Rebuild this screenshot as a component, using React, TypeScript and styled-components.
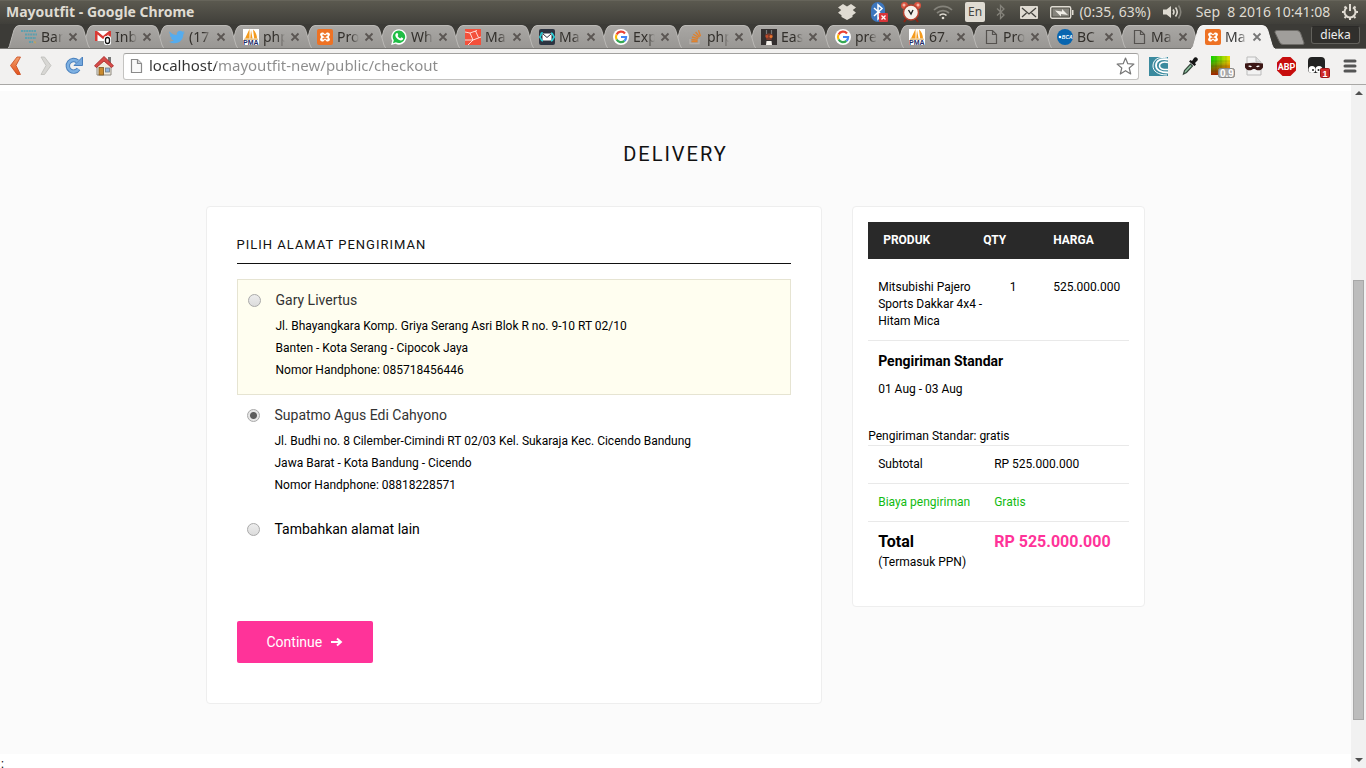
import React, { useState } from 'react';
import styled, { createGlobalStyle } from 'styled-components';

const GlobalStyle = createGlobalStyle`
  * { box-sizing: border-box; }
  body { margin: 0; background: #fff; overflow: hidden; }
`;

const uiFont = '"Noto Sans", "Open Sans", sans-serif';
const pageFont = 'Roboto, "Liberation Sans", sans-serif';

/* ---------- window frame ---------- */

const Window = styled.div`
  display: flex;
  flex-direction: column;
  height: 100vh;
  font-family: ${uiFont};
`;

const TitleBar = styled.header`
  display: flex;
  align-items: center;
  flex: none;
  height: 24px;
  padding-left: 6px;
  color: #dfdbd2;
  background: linear-gradient(#5c5a50, #403f3a);
  box-shadow: inset 0 1px 0 #66645a;
`;

const WindowTitle = styled.div`
  flex: 1;
  font-size: 14px;
  font-weight: 700;
  line-height: 20px;
  white-space: nowrap;
`;

const Tray = styled.div`
  display: flex;
  align-items: center;
  height: 100%;
`;

const Slot = styled.div<{ $w: number }>`
  display: flex;
  align-items: center;
  justify-content: center;
  flex: none;
  width: ${(p) => p.$w}px;
  font-size: 14px;
  line-height: 20px;
  white-space: pre;
`;

const LangBadge = styled.span`
  width: 20px;
  height: 20px;
  border-radius: 2px;
  background: #dfdbd2;
  color: #45443f;
  font-size: 12px;
  line-height: 20px;
  text-align: center;
`;

/* ---------- tab strip ---------- */

const TabStrip = styled.nav`
  display: flex;
  align-items: stretch;
  flex: none;
  height: 25px;
  padding: 1px 6px 0 12px;
  background: #3c3b37;
  box-shadow: inset 0 -1px 0 #767572;
`;

const Tab = styled.div<{ $active?: boolean; $z: number }>`
  position: relative;
  z-index: ${(p) => p.$z};
  display: flex;
  align-items: center;
  flex: none;
  width: 74px;
  padding-left: 9px;
  color: ${(p) => (p.$active ? '#3a3a3a' : '#33302c')};
`;

const TabShape = styled.svg`
  position: absolute;
  left: -6px;
  top: 0;
  z-index: -1;
`;

const TabTitle = styled.span`
  width: 22px;
  margin: 0 5px 0 4px;
  overflow: hidden;
  font-size: 14px;
  line-height: 20px;
  white-space: nowrap;
  mask-image: linear-gradient(90deg, #000 14px, transparent 22px);
`;

const IconButton = styled.button`
  display: flex;
  align-items: center;
  justify-content: center;
  padding: 0;
  border: 0;
  background: none;
`;

const NewTab = styled(IconButton)`
  margin-left: 4px;
  align-self: center;
`;

const UserButton = styled.button`
  align-self: flex-start;
  width: 49px;
  height: 18px;
  margin: 1px 0 0 auto;
  padding: 0;
  border: 1px solid #62615c;
  border-top-color: #2b2a28;
  border-radius: 3px;
  background: #302f2c;
  color: #eee;
  font: 12px/16px ${uiFont};
`;

/* ---------- toolbar ---------- */

const Toolbar = styled.div`
  display: flex;
  align-items: center;
  flex: none;
  height: 36px;
  padding-bottom: 1px;
  background: #f2f1f0;
  border-bottom: 1px solid #a9a8a6;
`;

const AddressBar = styled.label`
  display: flex;
  align-items: center;
  flex: 1;
  height: 27px;
  padding: 0 3px 0 6px;
  border: 1px solid #c4c3c1;
  border-top-color: #a2a19f;
  border-radius: 3px;
  background: #fff;
`;

const AddressInput = styled.input`
  flex: 1;
  min-width: 0;
  height: 22px;
  margin: 0 8px 0 6px;
  padding: 0 0 2px;
  border: 0;
  outline: 0;
  font: 15px/20px ${uiFont};
  color: transparent;
  background: linear-gradient(90deg, #333 67px, #8c8c8c 67px);
  background-clip: text;
  -webkit-background-clip: text;
`;

const Extensions = styled.div`
  display: flex;
  margin-left: 3px;
`;

const ToolButton = styled(IconButton)<{ $w: number }>`
  width: ${(p) => p.$w}px;
  height: 28px;
`;

/* ---------- viewport and scroll bar ---------- */

const Viewport = styled.div`
  display: flex;
  flex: 1;
  min-height: 0;
`;

const Page = styled.main`
  flex: 1;
  min-width: 0;
  padding-top: 6px;
  overflow: hidden;
  background: #fff;
  color: #000;
  font: 12px/17px ${pageFont};
`;

const ScrollBar = styled.div`
  display: flex;
  flex-direction: column;
  flex: none;
  width: 15px;
  background: #f1f1f1;
`;

const ScrollArrow = styled(IconButton)`
  flex: none;
  height: 16px;
`;

const ScrollGap = styled.div<{ $grow: number }>`
  flex: ${(p) => p.$grow} 0 0;
`;

const ScrollThumb = styled.div`
  flex: 439 0 0;
  margin: 0 2px;
  border: 1px solid #a8a8a8;
  background: #bcbcbc;
`;

/* ---------- checkout page ---------- */

const Section = styled.section`
  padding: 51px 16px 50px;
  background: #fbfbfb;
`;

const Title = styled.h1`
  margin: 0 0 40px;
  color: #111;
  font-size: 20px;
  font-weight: 400;
  line-height: 24px;
  letter-spacing: 2px;
  text-align: center;
`;

const Columns = styled.div`
  display: grid;
  grid-template-columns: repeat(12, 1fr);
  column-gap: 30px;
  align-items: start;
  max-width: 940px;
  margin: 0 auto;
`;

const Card = styled.div`
  border: 1px solid #eee;
  border-radius: 4px;
  background: #fff;
`;

const AddressCard = styled(Card)`
  grid-column: span 8;
  padding: 30px 30px 40px;
`;

const SummaryCard = styled(Card)`
  grid-column: span 4;
  padding: 15px 15px 24px;
`;

const CardTitle = styled.h2`
  margin: 0 0 15px;
  padding-bottom: 10px;
  border-bottom: 1px solid #111;
  color: #111;
  font-size: 13px;
  font-weight: 400;
  line-height: 16px;
  letter-spacing: 1px;
`;

const Option = styled.label<{ $highlight?: boolean }>`
  display: flex;
  gap: 15px;
  padding: 9px 10px 13px;
  border: ${(p) => (p.$highlight ? '1px solid #e6e4d2' : '0')};
  background: ${(p) => (p.$highlight ? '#fffef0' : 'none')};
`;

const Radio = styled.input`
  flex: none;
  width: 13px;
  height: 13px;
  margin: 5px 0 0;
  appearance: none;
  border: 1px solid #a9a9a9;
  border-radius: 50%;
  background: linear-gradient(#ededed, #dcdcdc);
  &:checked {
    background: radial-gradient(circle, #5c5c5c 3px, #e6e6e6 4px);
  }
`;

const OptionBody = styled.span`
  display: flex;
  flex-direction: column;
  line-height: 22px;
`;

const Name = styled.span<{ $plain?: boolean }>`
  margin-bottom: 4px;
  color: ${(p) => (p.$plain ? '#000' : '#333')};
  font-size: 14px;
`;

const ContinueButton = styled.button`
  display: flex;
  align-items: center;
  gap: 9px;
  height: 42px;
  margin-top: 64px;
  padding: 0 30px;
  border: 0;
  border-radius: 2px;
  background: #ff3399;
  color: #fff;
  font: 14px/20px ${pageFont};
`;

const Table = styled.table`
  width: 100%;
  border-collapse: collapse;
  table-layout: fixed;
  text-align: left;
`;

const HeadCell = styled.th<{ $pad: number; $w?: number }>`
  width: ${(p) => (p.$w ? `${p.$w}px` : 'auto')};
  padding: 10px 0 10px ${(p) => p.$pad}px;
  background: #292929;
  color: #fff;
`;

const ItemCell = styled.td<{ $center?: boolean }>`
  padding: 20px 0 10px ${(p) => (p.$center ? 0 : 10)}px;
  border-bottom: 1px solid #e9e9e9;
  text-align: ${(p) => (p.$center ? 'center' : 'left')};
  vertical-align: top;
`;

const Shipping = styled.div`
  margin: 10px 10px 30px;
`;

const ShippingTitle = styled.h3`
  margin: 0 0 10px;
  font-size: 14px;
  line-height: 20px;
`;

const SumRow = styled.tr<{ $green?: boolean }>`
  border-top: 1px solid #e9e9e9;
  color: ${(p) => (p.$green ? '#11bb11' : '#000')};
`;

const SumLabel = styled.th`
  width: 116px;
  padding: 10px 0 10px 10px;
  font-weight: 400;
`;

const SumValue = styled.td`
  padding: 10px 0 10px 10px;
  vertical-align: top;
`;

const TotalText = styled.strong<{ $pink?: boolean }>`
  display: block;
  color: ${(p) => (p.$pink ? '#ff3399' : '#000')};
  font-size: 16px;
  line-height: 20px;
`;

const TaxNote = styled.span`
  display: block;
  line-height: 20px;
`;

const Trailing = styled.div`
  padding-left: 1px;
  line-height: 20px;
`;

/* ---------- favicons ---------- */

const Fav = ({ children }: { children: React.ReactNode }) => (
  <svg width="16" height="16" viewBox="0 0 16 16" aria-hidden="true">{children}</svg>
);

const icons = {
  valley: (
    <Fav>
      <g stroke="#5d9fae" strokeWidth="2" strokeDasharray="2 0.600" fill="none">
        <path d="M0 2H15" /><path d="M4 5.500H16" /><path d="M4 9H15" /><path d="M8 13h4" />
      </g>
      <path d="M13 12l2 1-1 2z" fill="#c7a74a" />
    </Fav>
  ),
  gmail: (
    <Fav>
      <path d="M0 2h16v10H0z" fill="#fff" />
      <path d="M0 12V2h2l6 5 6-5h2v10h-2.500V5.500L8 10 2.500 5.500V12z" fill="#d93a34" />
      <rect x="9" y="7" width="7" height="9" rx="2" fill="#fff" />
      <rect x="10.500" y="8.500" width="4" height="6" rx="2" fill="#fff" stroke="#111" strokeWidth="1.300" />
    </Fav>
  ),
  twitter: (
    <Fav>
      <path d="M0.500 2.500c2 2.400 4.500 3.500 7.300 3.600C7.300 3.500 9 1.800 11 1.800c1 0 1.800.4 2.400 1l2-.8-1.300 1.900 1.700-.4-1.500 1.700C14.300 10 11 14.200 5.600 14.200c-2 0-3.800-.5-5.400-1.500 1.800.1 3.400-.3 4.700-1.400-1.500-.1-2.500-1-3-2.300h1.400C1.800 8.500.9 7.300.8 5.600l1.400.4C.8 5-.1 3.700.5 2.500z" fill="#55acee" />
    </Fav>
  ),
  pma: (
    <Fav>
      <rect width="16" height="16" fill="#fff" />
      <path d="M6.500 0v9.500H2zM8 1l1.500 8.500H7.300zM10 .5c2.500 2 4 5.500 4 9h-2.800z" fill="#f59b1c" />
      <path d="M1 10.200h14" stroke="#d8a85a" />
      <text x="0" y="16" fontFamily="Liberation Sans" fontWeight="700" fontSize="7" fill="#222c66">PMA</text>
    </Fav>
  ),
  xampp: (
    <Fav>
      <rect width="16" height="16" rx="2" fill="#ee7224" />
      <path d="M5 3.500h1.200L8 5.200l1.800-1.700H11a2.300 2.300 0 0 1 2 2.300L11.800 8l1.200 2.200a2.300 2.300 0 0 1-2 2.300H9.800L8 10.800l-1.800 1.700H5a2.300 2.300 0 0 1-2-2.300L4.200 8 3 5.800a2.300 2.300 0 0 1 2-2.300z" fill="#fff" />
      <path d="M5.500 6.300h1L8 7.500l1.500-1.200h1M5.500 9.800h1L8 8.500l1.500 1.300h1" stroke="#ee7224" strokeWidth="1.500" fill="none" />
    </Fav>
  ),
  whatsapp: (
    <Fav>
      <path d="M8.200.2A7.700 7.700 0 1 1 4.500 14.800L.1 16l1.200-4.300A7.700 7.700 0 0 1 8.200.2z" fill="#fff" />
      <path d="M8.200 1.500a6.300 6.300 0 1 1-3.400 11.800L2 14.200l.8-2.900A6.300 6.300 0 0 1 8.200 1.500z" fill="#20bd45" />
      <path d="M5.200 4.200l1.300-.1.800 1.900-.7 1c.7 1.200 1.500 1.900 2.700 2.400l1-1.100 1.900.9c.1 1.300-.9 2.200-2.200 2.200C7 11 4.500 8.400 4.300 6.200c0-.8.300-1.500.9-2z" fill="#fff" />
    </Fav>
  ),
  laravel: (
    <Fav>
      <rect width="16" height="16" fill="#f4503b" />
      <path d="M0 3l5 1 3 7 8-3M5 4l7-2.500M8 11l-5 5M10.500 2l3 6.500M0 11l8 0" stroke="#fff" strokeWidth="0.800" fill="none" />
    </Fav>
  ),
  mail: (
    <Fav>
      <rect width="16" height="16" rx="2" fill="#2c3340" />
      <path d="M4 4H2.500A2.500 2.500 0 0 0 2 6L.8 8 2 10a2.500 2.500 0 0 0 2 2M12 4a2.500 2.500 0 0 1 2 2l1.200 2L14 10a2.500 2.500 0 0 1-2 2" stroke="#27d0d8" strokeWidth="1.600" fill="none" />
      <rect x="3.500" y="4.500" width="9" height="7" rx="1" fill="#fff" />
      <path d="M4 5l4 3.500L12 5" stroke="#2c3340" fill="none" />
    </Fav>
  ),
  google: (
    <Fav>
      <circle cx="8" cy="8" r="8" fill="#fff" />
      <g fill="none" strokeWidth="2.200">
        <path d="M12 4.400A5.100 5.100 0 0 0 3.600 5.500" stroke="#ea4335" />
        <path d="M3.600 5.500a5.100 5.100 0 0 0 0 5" stroke="#fbbc05" />
        <path d="M3.600 10.500a5.100 5.100 0 0 0 7.800 1.400" stroke="#34a853" />
        <path d="M8 8h5.100a5.100 5.100 0 0 1-1.700 3.900" stroke="#4285f4" />
      </g>
    </Fav>
  ),
  stack: (
    <Fav>
      <path d="M3 10v4.500h9V10" stroke="#b3aeaa" strokeWidth="1.300" fill="none" />
      <path d="M4.500 12.500h6M4.500 10.500l6 .6M5 8l6 1.600M6.300 5.300l5.300 3.200M8.600 3l4 4.800M11.500 1.200l2 6" stroke="#e0812c" strokeWidth="1.300" />
    </Fav>
  ),
  robot: (
    <Fav>
      <rect width="16" height="16" fill="#332f2f" />
      <path d="M5.500 1v4M10.500 1v4" stroke="#777" strokeWidth="1.200" />
      <path d="M4 6c2-2 6-2 8 0l-1.500 5h-5z" fill="#7a3a2c" />
      <circle cx="6" cy="7.500" r="1.400" fill="#c04c2c" /><circle cx="10" cy="7.500" r="1.500" fill="#e8762d" />
      <path d="M5.500 12h5l.5 4H5z" fill="#f4f0ea" />
    </Fav>
  ),
  page: (
    <Fav>
      <path d="M3.500 1.500h6l4 4v9h-10zM9.500 1.500v4h4" stroke="#55524f" strokeWidth="1.200" fill="none" />
    </Fav>
  ),
  bca: (
    <Fav>
      <circle cx="8" cy="8" r="8" fill="#0765b0" />
      <circle cx="3" cy="8" r="1.300" fill="#fff" />
      <text x="4.800" y="10" fontFamily="Liberation Sans" fontWeight="700" fontStyle="italic" fontSize="5" fill="#fff">BCA</text>
    </Fav>
  ),
};

const tabs: { icon: keyof typeof icons; title: string }[] = [
  { icon: 'valley', title: 'Ban' },
  { icon: 'gmail', title: 'Inb' },
  { icon: 'twitter', title: '(17' },
  { icon: 'pma', title: 'php' },
  { icon: 'xampp', title: 'Pro' },
  { icon: 'whatsapp', title: 'Wh' },
  { icon: 'laravel', title: 'Ma' },
  { icon: 'mail', title: 'Ma' },
  { icon: 'google', title: 'Exp' },
  { icon: 'stack', title: 'php' },
  { icon: 'robot', title: 'Eas' },
  { icon: 'google', title: 'pre' },
  { icon: 'pma', title: '67.' },
  { icon: 'page', title: 'Pro' },
  { icon: 'bca', title: 'BC' },
  { icon: 'page', title: 'Ma' },
  { icon: 'xampp', title: 'Ma' },
];

const BrowserTab = ({ icon, title, active, z }: { icon: keyof typeof icons; title: string; active: boolean; z: number }) => (
  <Tab $active={active} $z={z}>
    <TabShape width="86" height="24" viewBox="-6 0 86 24" aria-hidden="true">
      <path
        d="M-5 24C-3 23-2.500 21-2 19L2 5Q3.500.5 7 .5H66Q70 .5 71.500 4.500L76 20Q77 23 79 24"
        fill={active ? '#f2f1f0' : 'url(#tabFill)'}
        stroke={active ? '#f8f7f6' : '#bbb9b6'}
        strokeWidth="1"
      />
      {!active && <path d="M-5 23.500H79" stroke="#767572" />}
    </TabShape>
    {icons[icon]}
    <TabTitle>{title}</TabTitle>
    <IconButton aria-label="Close tab">
      <svg width="10" height="10" viewBox="0 0 10 10">
        <path d="M1.500 1.500l7 7M8.500 1.500l-7 7" stroke={active ? '#777' : '#5b5653'} strokeWidth="1.800" />
      </svg>
    </IconButton>
  </Tab>
);

/* ---------- tray icons ---------- */

const Dropbox = () => (
  <svg width="18" height="16" viewBox="0 0 18 16">
    <path d="M5 0l4 2.600L13 0l5 3.500L14.800 6 18 8.800l-3.500 2.400V13L9 16l-5.500-3v-1.800L0 8.800 3.200 6 0 3.500z" fill="#dfdbd2" />
  </svg>
);

const BluetoothOff = () => (
  <svg width="20" height="22" viewBox="0 0 20 22">
    <rect x="2" y="1" width="14" height="20" rx="7" fill="#3d76bd" />
    <path d="M5 7l8 7-4 4V4l4 3.500L5 15" stroke="#fff" strokeWidth="1.500" fill="none" />
    <rect x="10" y="12" width="9" height="9" rx="1" fill="#d9353a" />
    <path d="M12.500 14.500l4 4M16.500 14.500l-4 4" stroke="#fff" strokeWidth="1.300" />
  </svg>
);

const Alarm = () => (
  <svg width="22" height="22" viewBox="0 0 22 22">
    <circle cx="4.500" cy="4.500" r="3.500" fill="#d9533f" /><circle cx="17.500" cy="4.500" r="3.500" fill="#d9533f" />
    <circle cx="4" cy="4" r="1.500" fill="#f3b3a5" /><circle cx="18" cy="4" r="1.500" fill="#f3b3a5" />
    <path d="M6 18l-2 3M16 18l2 3" stroke="#8b2414" strokeWidth="2" />
    <circle cx="11" cy="11.500" r="7.500" fill="#f6f2ec" stroke="#b5402d" strokeWidth="1.500" />
    <path d="M8.500 9l2.500 4 2-4" stroke="#222" strokeWidth="1.400" fill="none" />
  </svg>
);

const Wifi = () => (
  <svg width="20" height="16" viewBox="0 0 20 16" fill="none" strokeWidth="1.700">
    <path d="M1 6a13 13 0 0 1 18 0" stroke="#85837b" /><path d="M4 9a9 9 0 0 1 12 0" stroke="#85837b" />
    <path d="M6.500 11.500a5 5 0 0 1 7 0" stroke="#dfdbd2" /><circle cx="10" cy="14" r="1.300" fill="#dfdbd2" />
  </svg>
);

const Bluetooth = () => (
  <svg width="10" height="16" viewBox="0 0 10 16">
    <path d="M1 4.500l7 6.500-3.500 3.500v-13L8 5 1 11.500" stroke="#85837b" strokeWidth="1.300" fill="none" />
  </svg>
);

const Mail = () => (
  <svg width="18" height="13" viewBox="0 0 18 13">
    <rect width="18" height="13" rx="1" fill="#dfdbd2" />
    <path d="M2 2l7 6 7-6M2 11l4.500-4M16 11l-4.500-4" stroke="#45443f" strokeWidth="1.300" fill="none" />
  </svg>
);

const Battery = () => (
  <svg width="24" height="13" viewBox="0 0 24 13">
    <rect x="0.700" y="0.700" width="20" height="11.500" rx="1.500" fill="none" stroke="#dfdbd2" strokeWidth="1.400" />
    <path d="M22 4v5h1.500V4z" fill="#dfdbd2" />
    <rect x="2.500" y="2.500" width="16.500" height="8" fill="#85837b" />
    <path d="M5 4.500l7 1V3l6 6-7-1v2.500z" fill="#efece5" />
  </svg>
);

const Volume = () => (
  <svg width="20" height="16" viewBox="0 0 20 16">
    <path d="M0 5.500h3.500L8 2v12l-4.500-3.500H0z" fill="#dfdbd2" />
    <g fill="none" strokeWidth="1.600">
      <path d="M10 5.500q2 2.500 0 5" stroke="#dfdbd2" /><path d="M12.500 3.500q3.500 4.500 0 9" stroke="#dfdbd2" />
      <path d="M15.500 1.500q4.500 6.500 0 13" stroke="#85837b" />
    </g>
  </svg>
);

const Power = () => (
  <svg width="18" height="18" viewBox="0 0 18 18" fill="none" stroke="#dfdbd2">
    <path d="M6 4.300a5.500 5.500 0 1 0 6 0" strokeWidth="2" />
    <path d="M9 1v7" strokeWidth="2" />
    <path d="M3.500 3.500l1.500 1.500M14.500 3.500L13 5M1 9h2M15 9h2M3.500 15L5 13.500M14.500 15L13 13.500M9 15v2" strokeWidth="2" />
  </svg>
);

/* ---------- toolbar icons ---------- */

const Back = () => (
  <svg width="14" height="20" viewBox="0 0 14 20">
    <path d="M8 1L1.500 9.500 8 18.500h3.500L7 9.500 11.500 1z" fill="url(#backFill)" stroke="#c8481c" strokeWidth="0.800" />
  </svg>
);

const Forward = () => (
  <svg width="14" height="20" viewBox="0 0 14 20">
    <path d="M6.500 1L13 9.500 6.500 18.500H3L8 9.500 3 1z" fill="#d8d7d4" stroke="#bdbcb9" strokeWidth="0.800" />
  </svg>
);

const Reload = () => (
  <svg width="18" height="20" viewBox="0 0 18 20">
    <path d="M13.500 13a5.800 5.800 0 1 1-1-7.500" fill="none" stroke="#4a80bd" strokeWidth="4.400" />
    <path d="M17.500 1v8.500H9z" fill="#74a7dc" stroke="#4a80bd" />
    <path d="M13.500 13a5.800 5.800 0 1 1-1-7.500" fill="none" stroke="#7db0e2" strokeWidth="2.600" />
  </svg>
);

const Home = () => (
  <svg width="20" height="20" viewBox="0 0 20 20">
    <rect x="14" y="1" width="3" height="6" fill="#777" />
    <path d="M3 9.500L10 3l7 6.500V19H3z" fill="#f1ece0" stroke="#8d8a80" />
    <rect x="5" y="11.500" width="4.500" height="7.500" fill="#c98a2f" stroke="#7a5520" strokeWidth="0.800" />
    <rect x="11.500" y="12" width="4" height="4" fill="#8fb6de" stroke="#6d7b89" strokeWidth="0.800" />
    <path d="M10 .5l9.500 9.300-2 1.700L10 5l-7.500 6.500-2-1.700z" fill="#d84b48" stroke="#a82c2c" strokeWidth="0.900" />
  </svg>
);

const PageIcon = () => (
  <svg width="13" height="16" viewBox="0 0 13 16">
    <path d="M1.500 1.500h6l4 4v9h-10z" fill="#fafafa" stroke="#8a8a8a" strokeWidth="1.200" />
    <path d="M7.500 1.500v4h4" fill="#ddd" stroke="#8a8a8a" strokeWidth="1.200" />
  </svg>
);

const Star = () => (
  <svg width="19" height="18" viewBox="0 0 19 18">
    <path d="M9.500 1l2.300 5.700 6.100.4-4.700 3.900 1.500 6-5.200-3.300L4.300 17l1.500-6L1.100 7.100l6.100-.4z" fill="#fff" stroke="#777" strokeWidth="1.200" strokeLinejoin="round" />
  </svg>
);

const Spiral = () => (
  <svg width="19" height="19" viewBox="0 0 19 19">
    <rect width="19" height="19" fill="#3b8a9e" />
    <g fill="none" stroke="#fff">
      <path d="M18 1C9-1 4 3 4 9c0 5 5 9 14 9" strokeWidth="1" />
      <path d="M19 2.500C11 1 7 4 7 8.500c0 4.500 5 7 12 7" strokeWidth="1.800" />
      <path d="M19 5.500c-5-1.500-8.500.5-8.500 3.300 0 3 4 4.200 8.500 3.700" strokeWidth="1.500" />
    </g>
  </svg>
);

const Dropper = () => (
  <svg width="18" height="20" viewBox="0 0 18 20">
    <path d="M2.500 18l1-3.500 6-6.500 2 2-6 6.500z" fill="#8fc3a0" stroke="#34453a" strokeWidth="1.200" />
    <path d="M8 5.500l1.500-1.500L11 5l2-3c1.500-2 5 .500 3.500 2.500L14 7l1 1.500-1.500 1.500z" fill="#151515" />
  </svg>
);

const ColorGrid = () => (
  <svg width="25" height="24" viewBox="0 0 25 24">
    <rect width="19" height="19" x="1" y="2" fill="url(#gridX)" /><rect width="19" height="19" x="1" y="2" fill="url(#gridY)" />
    <path d="M6 2v19M11 2v19M16 2v19M1 7h19M1 12h19M1 17h19" stroke="#000" strokeOpacity="0.120" />
    <rect x="8.500" y="14.500" width="16" height="9" rx="2" fill="#aaa" stroke="#888" />
    <text x="10" y="23" fontFamily="Liberation Sans" fontWeight="700" fontSize="10" fill="#fff">0.9</text>
  </svg>
);

const Masked = () => (
  <svg width="20" height="20" viewBox="0 0 20 20">
    <path d="M3 1h9l5 5v13H3z" fill="#f2f2f2" stroke="#bbb" /><path d="M12 1v5h5" fill="#ddd" stroke="#bbb" />
    <path d="M1 7.500c6-1 12-1 18 0v4c-2 3.500-6 3.500-8 1.500H9c-2 2-6 2-8-1.500z" fill="#3c1715" />
    <path d="M4 10q2-1 4 .500-2 1.500-4-.5zM12 10.500q2-1.500 4-.5-2 2-4 .5z" fill="#fff" />
  </svg>
);

const AdBlock = () => (
  <svg width="19" height="19" viewBox="0 0 19 19">
    <path d="M5.600 0h7.800L19 5.600v7.800L13.400 19H5.600L0 13.400V5.600z" fill="#c70d0d" />
    <text x="9.500" y="12.700" textAnchor="middle" fontFamily="Roboto" fontWeight="700" fontSize="9" fill="#fff">ABP</text>
  </svg>
);

const Monkey = () => (
  <svg width="24" height="24" viewBox="0 0 24 24">
    <rect x="2" y="3" width="17" height="16" rx="4" fill="#222" />
    <circle cx="6" cy="15.500" r="3.500" fill="#fff" /><circle cx="13" cy="15.500" r="3.500" fill="#fff" />
    <circle cx="7" cy="16" r="1" fill="#222" /><circle cx="12.500" cy="16" r="1" fill="#222" />
    <rect x="14.500" y="14.500" width="9" height="9" rx="1" fill="#cf2b2b" stroke="#9c1717" />
    <text x="19" y="22.500" textAnchor="middle" fontFamily="Liberation Sans" fontWeight="700" fontSize="9" fill="#fff">1</text>
  </svg>
);

const Menu = () => (
  <svg width="14" height="14" viewBox="0 0 14 14">
    <path d="M2 2h10M2 7h10M2 12h10" stroke="#555" strokeWidth="3" strokeLinecap="round" />
  </svg>
);

const GradientDefs = styled.svg`
  position: absolute;
`;

const Gradients = () => (
  <GradientDefs width="0" height="0" aria-hidden="true">
    <defs>
      <linearGradient id="tabFill" x1="0" y1="0" x2="0" y2="1">
        <stop offset="0" stopColor="#a9a7a4" /><stop offset="1" stopColor="#989693" />
      </linearGradient>
      <linearGradient id="backFill" x1="0" y1="0" x2="0" y2="1">
        <stop offset="0" stopColor="#f3a06c" /><stop offset="1" stopColor="#e2521c" />
      </linearGradient>
      <linearGradient id="gridX"><stop offset="0" stopColor="#0fd000" /><stop offset="1" stopColor="#f0e000" /></linearGradient>
      <linearGradient id="gridY" x1="0" y1="0" x2="0" y2="1">
        <stop offset="0.200" stopColor="#d00" stopOpacity="0" /><stop offset="1" stopColor="#b01000" stopOpacity="0.900" />
      </linearGradient>
    </defs>
  </GradientDefs>
);

const extensions = [
  { name: 'Spiral', icon: <Spiral /> },
  { name: 'Color picker', icon: <Dropper /> },
  { name: 'Color grid', icon: <ColorGrid /> },
  { name: 'Masked page', icon: <Masked /> },
  { name: 'Adblock', icon: <AdBlock /> },
  { name: 'Scripts', icon: <Monkey /> },
  { name: 'Menu', icon: <Menu /> },
];

const addresses = [
  {
    id: 'gary',
    name: 'Gary Livertus',
    lines: ['Jl. Bhayangkara Komp. Griya Serang Asri Blok R no. 9-10 RT 02/10', 'Banten - Kota Serang - Cipocok Jaya', 'Nomor Handphone: 085718456446'],
    highlight: true,
  },
  {
    id: 'supatmo',
    name: 'Supatmo Agus Edi Cahyono',
    lines: ['Jl. Budhi no. 8 Cilember-Cimindi RT 02/03 Kel. Sukaraja Kec. Cicendo Bandung', 'Jawa Barat - Kota Bandung - Cicendo', 'Nomor Handphone: 08818228571'],
    highlight: false,
  },
  { id: 'new', name: 'Tambahkan alamat lain', lines: [], highlight: false },
];

export default function App() {
  const [selected, setSelected] = useState('supatmo');
  const [url, setUrl] = useState('localhost/mayoutfit-new/public/checkout');

  return (
    <Window>
      <GlobalStyle />
      <Gradients />
      <TitleBar>
        <WindowTitle>Mayoutfit - Google Chrome</WindowTitle>
        <Tray>
          <Slot $w={34}><Dropbox /></Slot>
          <Slot $w={30}><BluetoothOff /></Slot>
          <Slot $w={34}><Alarm /></Slot>
          <Slot $w={30}><Wifi /></Slot>
          <Slot $w={34}><LangBadge>En</LangBadge></Slot>
          <Slot $w={18}><Bluetooth /></Slot>
          <Slot $w={38}><Mail /></Slot>
          <Slot $w={28}><Battery /></Slot>
          <Slot $w={78}>(0:35, 63%)</Slot>
          <Slot $w={38}><Volume /></Slot>
          <Slot $w={142}>Sep  8 2016 10:41:08</Slot>
          <Slot $w={32}><Power /></Slot>
        </Tray>
      </TitleBar>

      <TabStrip>
        {tabs.map((t, i) => (
          <BrowserTab key={i} {...t} active={i === tabs.length - 1} z={i === tabs.length - 1 ? 20 : tabs.length - i} />
        ))}
        <NewTab aria-label="New tab">
          <svg width="31" height="15" viewBox="0 0 31 15">
            <path d="M3 .5H23Q25.500.5 26.500 3L30 13Q30.300 14.500 28 14.500H9Q6.500 14.500 5.500 12L1 2.500Q.5.500 3 .5z" fill="#a09e9b" stroke="#6d6b67" />
          </svg>
        </NewTab>
        <UserButton>dieka</UserButton>
      </TabStrip>

      <Toolbar>
        <ToolButton $w={31} aria-label="Back"><Back /></ToolButton>
        <ToolButton $w={28} aria-label="Forward"><Forward /></ToolButton>
        <ToolButton $w={30} aria-label="Reload"><Reload /></ToolButton>
        <ToolButton $w={30} aria-label="Home"><Home /></ToolButton>
        <Slot $w={4} />
        <AddressBar>
          <PageIcon />
          <AddressInput aria-label="Address" value={url} onChange={(e) => setUrl(e.target.value)} />
          <Star />
        </AddressBar>
        <Extensions>
          {extensions.map((x) => (
            <ToolButton key={x.name} $w={32} aria-label={x.name}>{x.icon}</ToolButton>
          ))}
        </Extensions>
      </Toolbar>

      <Viewport>
        <Page>
          <Section>
            <Title>DELIVERY</Title>
            <Columns>
              <AddressCard>
                <CardTitle>PILIH ALAMAT PENGIRIMAN</CardTitle>
                {addresses.map((a) => (
                  <Option key={a.id} $highlight={a.highlight}>
                    <Radio type="radio" name="address" checked={selected === a.id} onChange={() => setSelected(a.id)} />
                    <OptionBody>
                      <Name $plain={a.id === 'new'}>{a.name}</Name>
                      {a.lines.map((l) => <span key={l}>{l}</span>)}
                    </OptionBody>
                  </Option>
                ))}
                <ContinueButton>
                  Continue
                  <svg width="12" height="10" viewBox="0 0 12 10" aria-hidden="true">
                    <path d="M0 5h10M6 1.500L10 5 6 8.500" stroke="#fff" strokeWidth="1.900" fill="none" />
                  </svg>
                </ContinueButton>
              </AddressCard>

              <SummaryCard>
                <Table>
                  <thead>
                    <tr>
                      <HeadCell $pad={15} $w={115}>PRODUK</HeadCell>
                      <HeadCell $pad={0} $w={60}>QTY</HeadCell>
                      <HeadCell $pad={10}>HARGA</HeadCell>
                    </tr>
                  </thead>
                  <tbody>
                    <tr>
                      <ItemCell>Mitsubishi Pajero Sports Dakkar 4x4 - Hitam Mica</ItemCell>
                      <ItemCell $center>1</ItemCell>
                      <ItemCell>525.000.000</ItemCell>
                    </tr>
                  </tbody>
                </Table>
                <Shipping>
                  <ShippingTitle>Pengiriman Standar</ShippingTitle>
                  01 Aug - 03 Aug
                </Shipping>
                <div>Pengiriman Standar: gratis</div>
                <Table>
                  <tbody>
                    <SumRow>
                      <SumLabel scope="row">Subtotal</SumLabel>
                      <SumValue>RP 525.000.000</SumValue>
                    </SumRow>
                    <SumRow $green>
                      <SumLabel scope="row">Biaya pengiriman</SumLabel>
                      <SumValue>Gratis</SumValue>
                    </SumRow>
                    <SumRow>
                      <SumLabel scope="row">
                        <TotalText>Total</TotalText>
                        <TaxNote>(Termasuk PPN)</TaxNote>
                      </SumLabel>
                      <SumValue><TotalText $pink>RP 525.000.000</TotalText></SumValue>
                    </SumRow>
                  </tbody>
                </Table>
              </SummaryCard>
            </Columns>
          </Section>
          <Trailing>:</Trailing>
        </Page>
        <ScrollBar>
          <ScrollArrow aria-label="Scroll up">
            <svg width="8" height="4" viewBox="0 0 8 4"><path d="M4 0l4 4H0z" fill="#505050" /></svg>
          </ScrollArrow>
          <ScrollGap $grow={180} />
          <ScrollThumb />
          <ScrollGap $grow={32} />
          <ScrollArrow aria-label="Scroll down">
            <svg width="8" height="4" viewBox="0 0 8 4"><path d="M4 4l4-4H0z" fill="#505050" /></svg>
          </ScrollArrow>
        </ScrollBar>
      </Viewport>
    </Window>
  );
}
